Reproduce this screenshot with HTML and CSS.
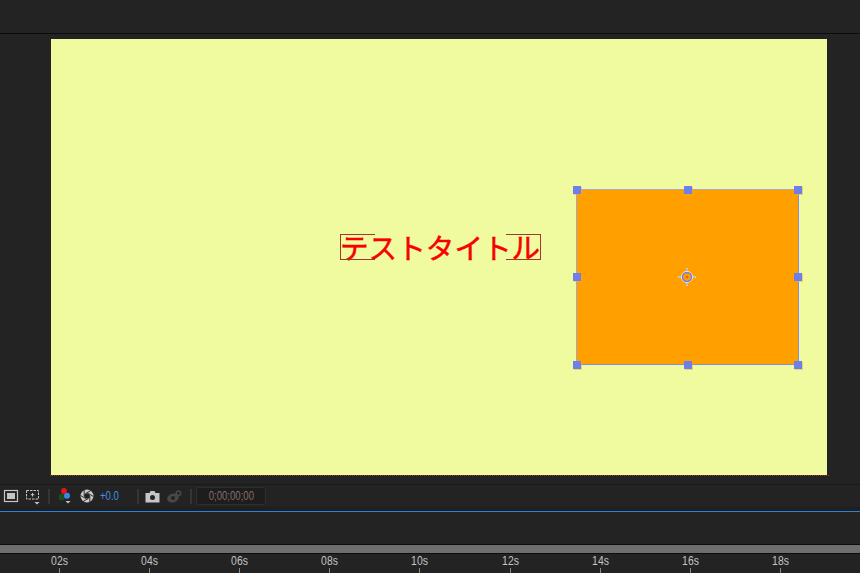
FILE: index.html
```html
<!DOCTYPE html>
<html lang="ja">
<head>
    <meta charset="UTF-8">
    <meta name="viewport" content="width=device-width, initial-scale=1.0">
    <title>Composition viewer</title>
    <link rel="stylesheet" href="styles.css">
</head>
<body>
    <div class="app">
        <div class="tab-bar"></div>
        <main class="viewer">
            <div class="comp">
                <div class="title-layer">
                    <span class="title-text">テストタイトル</span>
                    <span class="bracket bracket-left"></span>
                    <span class="bracket bracket-right"></span>
                </div>
                <div class="shape-layer">
                    <span class="handle h-tl"></span>
                    <span class="handle h-tc"></span>
                    <span class="handle h-tr"></span>
                    <span class="handle h-ml"></span>
                    <span class="handle h-mr"></span>
                    <span class="handle h-bl"></span>
                    <span class="handle h-bc"></span>
                    <span class="handle h-br"></span>
                    <svg class="anchor" width="18" height="18" viewBox="0 0 18 18">
                        <path d="M9 0.500V4M9 14v3.500M0.500 9H4M14 9h3.500" stroke="#fff3dc" stroke-width="2" fill="none"/>
                        <path d="M9 1V4M9 14v3M1 9H4M14 9h3" stroke="#6d7fec" stroke-width="1" fill="none"/>
                        <circle cx="9" cy="9" r="5.500" fill="none" stroke="#fff3dc" stroke-width="1"/>
                        <circle cx="9" cy="9" r="4.500" fill="none" stroke="#6d7fec" stroke-width="1.500"/>
                        <circle cx="9" cy="9" r="1.500" fill="#e8651a"/>
                    </svg>
                </div>
            </div>
        </main>
        <div class="toolbar">
            <svg class="icon" width="16" height="14" viewBox="0 0 16 14">
                <rect x="1.500" y="1.500" width="13" height="11" fill="none" stroke="#c4c4c4" stroke-width="1.200"/>
                <rect x="4" y="4" width="8" height="6" fill="#c4c4c4"/>
            </svg>
            <svg class="icon icon-safe" width="18" height="18" viewBox="0 0 18 18">
                <rect x="1.500" y="1.500" width="12" height="8.500" fill="none" stroke="#c4c4c4" stroke-width="1" stroke-dasharray="2.500 1"/>
                <path d="M7.500 4v3.500M5.700 5.700h3.600" stroke="#c4c4c4" stroke-width="1"/>
                <path d="M9.500 13h5l-2.500 2.500z" fill="#c4c4c4"/>
            </svg>
            <span class="sep sep-a"></span>
            <svg class="icon icon-rgb" width="18" height="19" viewBox="0 0 18 19">
                <circle cx="5" cy="9" r="3.500" fill="#1c4a22"/>
                <circle cx="7" cy="2.900" r="2.900" fill="#ee1111"/>
                <circle cx="10" cy="7.700" r="3" fill="#3d86e6"/>
                <path d="M8.500 13h5l-2.500 2.500z" fill="#c4c4c4"/>
            </svg>
            <svg class="icon icon-shutter" width="14" height="14" viewBox="0 0 14 14">
                <circle cx="7" cy="7" r="6.500" fill="#c8c8c8"/>
                <circle cx="7" cy="7" r="2.800" fill="#232323"/>
                <path d="M9.800 7L9.800 12.870M8.400 9.420L3.320 12.350M5.600 9.420L0.520 6.490M4.200 7L4.200 1.130M5.600 4.580L10.680 1.650M8.400 4.580L13.480 7.510" stroke="#232323" stroke-width="0.900"/>
            </svg>
            <span class="exposure"><span class="squeezed">+0.0</span></span>
            <span class="sep sep-b"></span>
            <svg class="icon icon-camera" width="15" height="13" viewBox="0 0 15 13">
                <path fill-rule="evenodd" fill="#c8c4c8" d="M0.500 3H4.500L5.500 1H9.500L10.500 3H14.500V12.500H0.500ZM7.500 5A2.500 2.500 0 1 0 7.500 10A2.500 2.500 0 1 0 7.500 5Z"/>
            </svg>
            <svg class="icon icon-snapshot" width="15" height="13" viewBox="0 0 15 13">
                <ellipse cx="6" cy="8" rx="6" ry="4.300" transform="rotate(-15 6 8)" fill="#484848"/>
                <circle cx="6" cy="8" r="2" fill="#232323"/>
                <circle cx="11.500" cy="3.200" r="2.200" fill="none" stroke="#484848" stroke-width="1.600"/>
            </svg>
            <span class="sep sep-c"></span>
            <span class="timecode"><span class="squeezed">0;00;00;00</span></span>
        </div>
        <div class="toolbar-gap"></div>
        <div class="blank-panel"></div>
        <div class="work-bar"></div>
        <div class="ruler">
            <div class="tick"><span class="squeezed">02s</span></div>
            <div class="tick"><span class="squeezed">04s</span></div>
            <div class="tick"><span class="squeezed">06s</span></div>
            <div class="tick"><span class="squeezed">08s</span></div>
            <div class="tick"><span class="squeezed">10s</span></div>
            <div class="tick"><span class="squeezed">12s</span></div>
            <div class="tick"><span class="squeezed">14s</span></div>
            <div class="tick"><span class="squeezed">16s</span></div>
            <div class="tick"><span class="squeezed">18s</span></div>
        </div>
    </div>
</body>
</html>
```

FILE: styles.css
```css
body, html {
    margin: 0;
    padding: 0;
    background-color: #232323;
    font-family: "Liberation Sans", Arial, sans-serif;
    overflow: hidden;
}

.app {
    display: flex;
    flex-direction: column;
    width: 860px;
    height: 573px;
}

.tab-bar {
    height: 33px;
    border-bottom: 1px solid #0c0c0c;
}

.viewer {
    height: 451px;
    padding: 5px 0 0 51px;
    box-sizing: border-box;
    border-bottom: 1px solid #191919;
}

.comp {
    position: relative;
    width: 776px;
    height: 436px;
    background-color: #effb9e;
}

.comp::after {
    content: "";
    position: absolute;
    left: -1px;
    right: -2px;
    bottom: -1px;
    border-bottom: 1px dotted #a03a2a;
}

.title-layer {
    position: absolute;
    left: 289px;
    top: 195px;
    width: 201px;
    height: 26px;
}

.title-text {
    display: block;
    margin-top: -1px;
    font-family: "Noto Sans CJK JP", sans-serif;
    font-size: 28.600px;
    line-height: 27px;
    color: #f80000;
    -webkit-text-stroke: 0.5px #f80000;
    white-space: nowrap;
}

.bracket {
    position: absolute;
    top: 0;
    width: 34px;
    height: 24px;
    border: 1px solid #a03a30;
}

.bracket-left {
    left: 0;
    border-right: none;
}

.bracket-right {
    right: 0;
    border-left: none;
}

.shape-layer {
    position: absolute;
    left: 526px;
    top: 151px;
    width: 221px;
    height: 174px;
    background-color: #ffa000;
    box-shadow: -1px -1px 0 #a6a8c4, 1px 1px 0 #7f8fe8;
}

.handle {
    position: absolute;
    width: 8px;
    height: 8px;
    background-color: #6d7fe8;
    box-shadow: 1px 1px 0 rgba(255, 160, 60, 0.5);
}

.h-tl { left: -4px; top: -4px; }
.h-tc { left: 107px; top: -4px; }
.h-tr { left: 217px; top: -4px; }
.h-ml { left: -4px; top: 83px; }
.h-mr { left: 217px; top: 83px; }
.h-bl { left: -4px; top: 171px; }
.h-bc { left: 107px; top: 171px; }
.h-br { left: 217px; top: 171px; }

.anchor {
    position: absolute;
    left: 101px;
    top: 78px;
}

.toolbar {
    display: flex;
    align-items: center;
    height: 22px;
    padding-left: 3px;
}

.icon {
    flex: none;
    display: block;
}

.icon-safe {
    margin-left: 6px;
    margin-top: 4px;
}

.sep {
    flex: none;
    width: 2px;
    height: 15px;
    background-color: #353535;
}

.sep-a {
    margin-left: 5px;
}

.icon-rgb {
    margin-left: 7px;
    margin-top: 3px;
}

.icon-shutter {
    margin-left: 5px;
}

/* no narrow bitmap font here, so the small labels get squeezed */
.squeezed {
    display: inline-block;
    transform: scaleX(0.8);
}

.exposure {
    margin-left: 6px;
    width: 37px;
    font-size: 12px;
    color: #3f93e8;
}

.exposure .squeezed {
    transform-origin: left center;
}

.sep-b {
    margin-right: 6px;
}

.icon-snapshot {
    margin-left: 7px;
}

.sep-c {
    margin-left: 8px;
}

.timecode {
    margin-left: 4px;
    width: 70px;
    height: 18px;
    box-sizing: border-box;
    border: 1px solid #2f2f2f;
    border-radius: 2px;
    background-color: #1d1d1d;
    font-size: 12px;
    line-height: 16px;
    text-align: center;
    color: #8a6c6c;
}

.toolbar-gap {
    height: 4px;
    background-color: #1f1f1f;
}

.blank-panel {
    height: 34px;
    box-sizing: border-box;
    border-top: 1px solid #2b83dd;
    border-bottom: 1px solid #0c0c0c;
}

.work-bar {
    height: 8px;
    background-color: #6e6e6e;
    border-bottom: 1px solid #0c0c0c;
}

.ruler {
    display: flex;
    flex: 1;
    padding-left: 14.500px;
}

.tick {
    flex: none;
    width: 90.100px;
    display: flex;
    flex-direction: column;
    align-items: center;
    justify-content: space-between;
    font-size: 13px;
    line-height: 13px;
    color: #c4c4c4;
}

.tick::after {
    content: "";
    width: 1px;
    height: 5px;
    background-color: #8a8a8a;
}
```
